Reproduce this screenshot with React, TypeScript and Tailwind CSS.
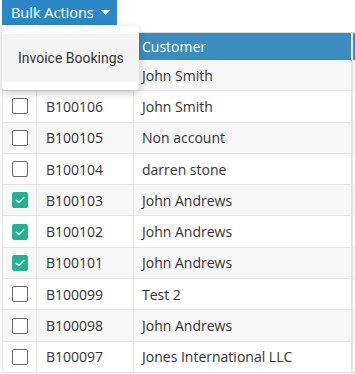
import React from "react";

type Booking = { id: string; customer: string; checked: boolean };

const rows: Booking[] = [
  { id: "", customer: "John Smith", checked: false },
  { id: "B100106", customer: "John Smith", checked: false },
  { id: "B100105", customer: "Non account", checked: false },
  { id: "B100104", customer: "darren stone", checked: false },
  { id: "B100103", customer: "John Andrews", checked: true },
  { id: "B100102", customer: "John Andrews", checked: true },
  { id: "B100101", customer: "John Andrews", checked: true },
  { id: "B100099", customer: "Test 2", checked: false },
  { id: "B100098", customer: "John Andrews", checked: false },
  { id: "B100097", customer: "Jones International LLC", checked: false },
];

function Checkbox({ checked }: { checked: boolean }) {
  if (checked) {
    return (
      <div className="w-4 h-4 rounded-[2px] bg-[#21b491] flex items-center justify-center">
        <svg width="10" height="8" viewBox="0 0 10 8" fill="none">
          <path d="M1.2 4.2 L3.8 6.6 L8.8 1.4" stroke="white" strokeWidth="1.4" strokeLinecap="round" strokeLinejoin="round" />
        </svg>
      </div>
    );
  }
  return <div className="w-4 h-4 rounded-[2px] border-[1.5px] border-[#6b6b6b] bg-white" />;
}

export default function App() {
  return (
    <div
      className="relative w-[355px] h-[374px] overflow-hidden bg-white pl-[2px] text-[14px] text-[#333]"
      style={{ fontFamily: '"Open Sans", sans-serif' }}
    >
      <button className="h-[25px] w-[115px] bg-[#2a88c9] text-white flex items-center pl-[9px] gap-[7px]">
        <span className="text-[14.5px]">Bulk Actions</span>
        <svg width="9" height="5" viewBox="0 0 9 5">
          <path d="M0 0 L9 0 L4.5 5 Z" fill="white" />
        </svg>
      </button>

      <div className="mt-[7px] w-[400px] border-l border-[#e6e6e6]">
        <div className="flex h-[28px] bg-[#3a8dbe] text-white border-t border-[#dcdcdc]">
          <div className="w-[34px]" />
          <div className="w-[97px]" />
          <div className="w-[219px] pl-[8px] flex items-center border-r-2 border-[#e6eef4]">Customer</div>
          <div className="flex-1" />
        </div>
        {rows.map((r, i) => (
          <div
            key={i}
            className={`flex h-[31.3px] border-b border-[#e4e4e4] ${i % 2 === 0 ? "bg-[#f7f7f7]" : "bg-white"}`}
          >
            <div className="w-[34px] flex items-center justify-center border-r border-[#e4e4e4]">
              {i > 0 && <Checkbox checked={r.checked} />}
            </div>
            <div className="w-[97px] pl-[9px] flex items-center border-r border-[#e4e4e4]">{r.id}</div>
            <div className="w-[219px] pl-[8px] flex items-center border-r-2 border-[#e4e4e4]">{r.customer}</div>
            <div className="flex-1" />
          </div>
        ))}
      </div>

      <div
        className="absolute left-[2px] top-[26px] w-[137px] h-[64px] bg-white rounded-[4px] shadow-[0_3px_8px_rgba(0,0,0,0.22)] py-[8px]"
        style={{ fontFamily: "Roboto, sans-serif" }}
      >
        <div className="h-[48px] bg-[#f4f4f4] flex items-center pl-[16px] text-[14px] text-[#333]">
          Invoice Bookings
        </div>
      </div>
    </div>
  );
}
